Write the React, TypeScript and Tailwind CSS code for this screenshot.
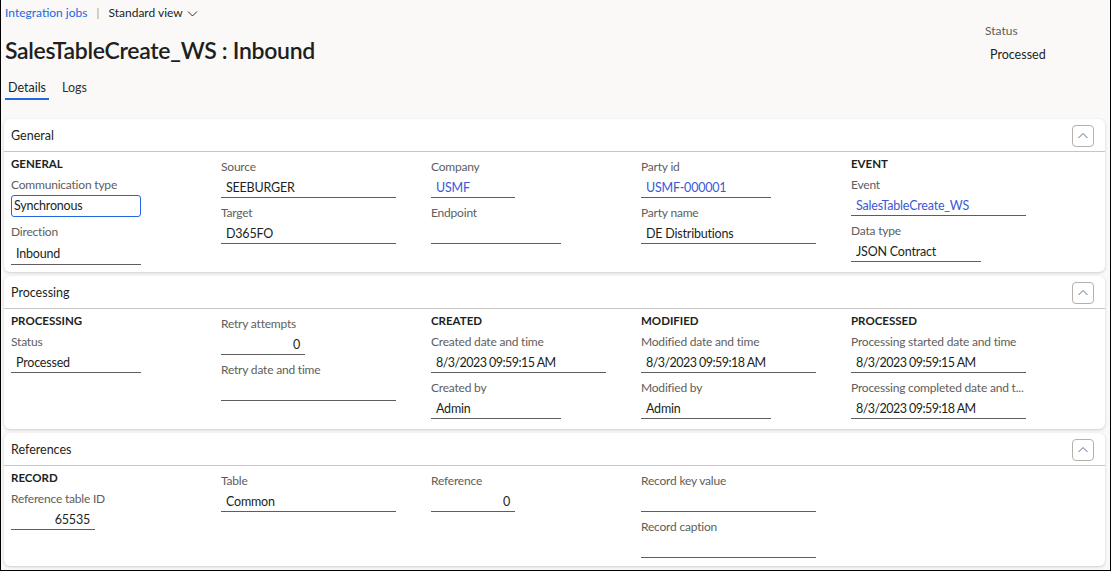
import React from "react";

type F = {
  label: string;
  value?: string;
  w: number;
  kind?: "text" | "link" | "num" | "box" | "enum" | "date";
};

type Col = { header?: string; fields: F[] };

const widthCls: Record<number, string> = {
  84: "w-[84px]",
  130: "w-[130px]",
  175: "w-[175px]",
};

function Field({ f, last }: { f: F; last: boolean }) {
  const mb = last ? "" : "mb-[5px]";
  const label = (
    <div className="h-[20px] overflow-hidden whitespace-nowrap text-[12px] leading-[20px] tracking-[-0.2px] text-[#605e5c]">
      {f.label}
    </div>
  );
  if (f.kind === "box") {
    return (
      <div className={mb}>
        {label}
        <div
          className={`${widthCls[f.w]} h-[22px] rounded-[3px] border border-[#2266e3] pl-[2px] text-[12.5px] leading-[20px] tracking-[-0.2px] text-[#201f1e]`}
        >
          {f.value}
        </div>
      </div>
    );
  }
  const h = f.kind === "enum" ? "h-[23px] leading-[22px] pt-[1px]" : "h-[21px] leading-[20px] pt-[1px]";
  const color = f.kind === "link" ? "text-[#3b59d6]" : "text-[#201f1e]";
  const align = f.kind === "num" ? "text-right pr-[5px]" : "pl-[5px]";
  const track = f.kind === "date" ? "tracking-[-0.55px]" : "tracking-[-0.2px]";
  return (
    <div className={mb}>
      {label}
      <div
        className={`${widthCls[f.w]} ${h} border-b border-[#605e5c] text-[12.5px] ${track} ${color} ${align} whitespace-nowrap`}
      >
        {f.value ?? ""}
      </div>
    </div>
  );
}

function Column({ c }: { c: Col }) {
  return (
    <div className={c.header ? "" : "pt-[3px]"}>
      {c.header && (
        <div className="mb-[1px] h-[20px] text-[11.5px] font-bold leading-[20px] text-[#201f1e]">{c.header}</div>
      )}
      {c.fields.map((f, i) => (
        <Field key={f.label} f={f} last={i === c.fields.length - 1} />
      ))}
    </div>
  );
}

function ChevronUp() {
  return (
    <svg width="12" height="12" viewBox="0 0 12 12" fill="none">
      <polyline points="1.5,8 6,3.5 10.5,8" stroke="#5c6b8a" strokeWidth="1" />
    </svg>
  );
}

function Card({ title, cols, pb }: { title: string; cols: Col[]; pb: string }) {
  return (
    <div className="rounded-[6px] bg-white shadow-[0_1px_3px_rgba(0,0,0,0.18)]">
      <div className="flex h-[33px] items-center justify-between border-b border-[#c8c6c4] pl-[7px] pr-[11px] pt-[2px]">
        <span className="text-[12.5px] text-[#201f1e]">{title}</span>
        <button className="flex h-[22px] w-[22px] items-center justify-center rounded-[4px] border border-[#b3b0ad] bg-white">
          <ChevronUp />
        </button>
      </div>
      <div className={`grid grid-cols-[repeat(5,210px)] pl-[7px] pt-[2px] ${pb}`}>
        {cols.map((c, i) => (
          <Column key={i} c={c} />
        ))}
      </div>
    </div>
  );
}

const general: Col[] = [
  {
    header: "GENERAL",
    fields: [
      { label: "Communication type", value: "Synchronous", w: 130, kind: "box" },
      { label: "Direction", value: "Inbound", w: 130, kind: "enum" },
    ],
  },
  {
    fields: [
      { label: "Source", value: "SEEBURGER", w: 175 },
      { label: "Target", value: "D365FO", w: 175 },
    ],
  },
  {
    fields: [
      { label: "Company", value: "USMF", w: 84, kind: "link" },
      { label: "Endpoint", value: "", w: 130 },
    ],
  },
  {
    fields: [
      { label: "Party id", value: "USMF-000001", w: 130, kind: "link" },
      { label: "Party name", value: "DE Distributions", w: 175 },
    ],
  },
  {
    header: "EVENT",
    fields: [
      { label: "Event", value: "SalesTableCreate_WS", w: 175, kind: "link" },
      { label: "Data type", value: "JSON Contract", w: 130 },
    ],
  },
];

const processing: Col[] = [
  {
    header: "PROCESSING",
    fields: [{ label: "Status", value: "Processed", w: 130 }],
  },
  {
    fields: [
      { label: "Retry attempts", value: "0", w: 84, kind: "num" },
      { label: "Retry date and time", value: "", w: 175 },
    ],
  },
  {
    header: "CREATED",
    fields: [
      { label: "Created date and time", value: "8/3/2023 09:59:15 AM", w: 175, kind: "date" },
      { label: "Created by", value: "Admin", w: 130 },
    ],
  },
  {
    header: "MODIFIED",
    fields: [
      { label: "Modified date and time", value: "8/3/2023 09:59:18 AM", w: 175, kind: "date" },
      { label: "Modified by", value: "Admin", w: 130 },
    ],
  },
  {
    header: "PROCESSED",
    fields: [
      { label: "Processing started date and time", value: "8/3/2023 09:59:15 AM", w: 175, kind: "date" },
      { label: "Processing completed date and t...", value: "8/3/2023 09:59:18 AM", w: 175, kind: "date" },
    ],
  },
];

const references: Col[] = [
  {
    header: "RECORD",
    fields: [{ label: "Reference table ID", value: "65535", w: 84, kind: "num" }],
  },
  {
    fields: [{ label: "Table", value: "Common", w: 175 }],
  },
  {
    fields: [{ label: "Reference", value: "0", w: 84, kind: "num" }],
  },
  {
    fields: [
      { label: "Record key value", value: "", w: 175 },
      { label: "Record caption", value: "", w: 175 },
    ],
  },
];

export default function App() {
  return (
    <div
      className="min-h-[571px] w-full border-x border-b border-black bg-[#faf9f8] text-[#201f1e]"
      style={{ fontFamily: "Lato, 'Open Sans', sans-serif" }}
    >
      <div className="flex">
        <div className="flex-1 pl-[4px]">
          <div className="flex h-[26px] items-center text-[12px]">
            <span className="text-[#2266e3]">Integration jobs</span>
            <span className="mx-[9px] text-[#c8a000]">|</span>
            <span className="text-[#201f1e]">Standard view</span>
            <svg className="ml-[4px]" width="11" height="11" viewBox="0 0 11 11" fill="none">
              <polyline points="1,3.5 5.5,8 10,3.5" stroke="#323130" strokeWidth="1" />
            </svg>
          </div>
          <div className="mt-[8px] h-[32px] text-[23px] font-semibold leading-[32px] tracking-[-0.3px] text-[#201f1e]">
            SalesTableCreate_WS : Inbound
          </div>
          <div className="flex gap-[13px] pt-[12px] text-[12.5px]">
            <div className="flex flex-col">
              <span className="h-[20px] px-[3px] leading-[20px] text-[#201f1e]">Details</span>
              <span className="h-[2px] w-full bg-[#2266e3]" />
            </div>
            <div className="flex flex-col">
              <span className="h-[20px] leading-[20px] text-[#323130]">Logs</span>
            </div>
          </div>
        </div>
        <div className="w-[125px] pt-[23px]">
          <div className="h-[16px] text-[12px] leading-[16px] text-[#605e5c]">Status</div>
          <div className="mt-[6px] h-[20px] pl-[5px] text-[12.5px] leading-[20px] text-[#201f1e]">Processed</div>
        </div>
      </div>
      <div className="mt-[19px] flex flex-col gap-[4px] pl-[3px] pr-[5px]">
        <Card title="General" cols={general} pb="pb-[7px]" />
        <Card title="Processing" cols={processing} pb="pb-[10px]" />
        <Card title="References" cols={references} pb="pb-[8px]" />
      </div>
    </div>
  );
}
